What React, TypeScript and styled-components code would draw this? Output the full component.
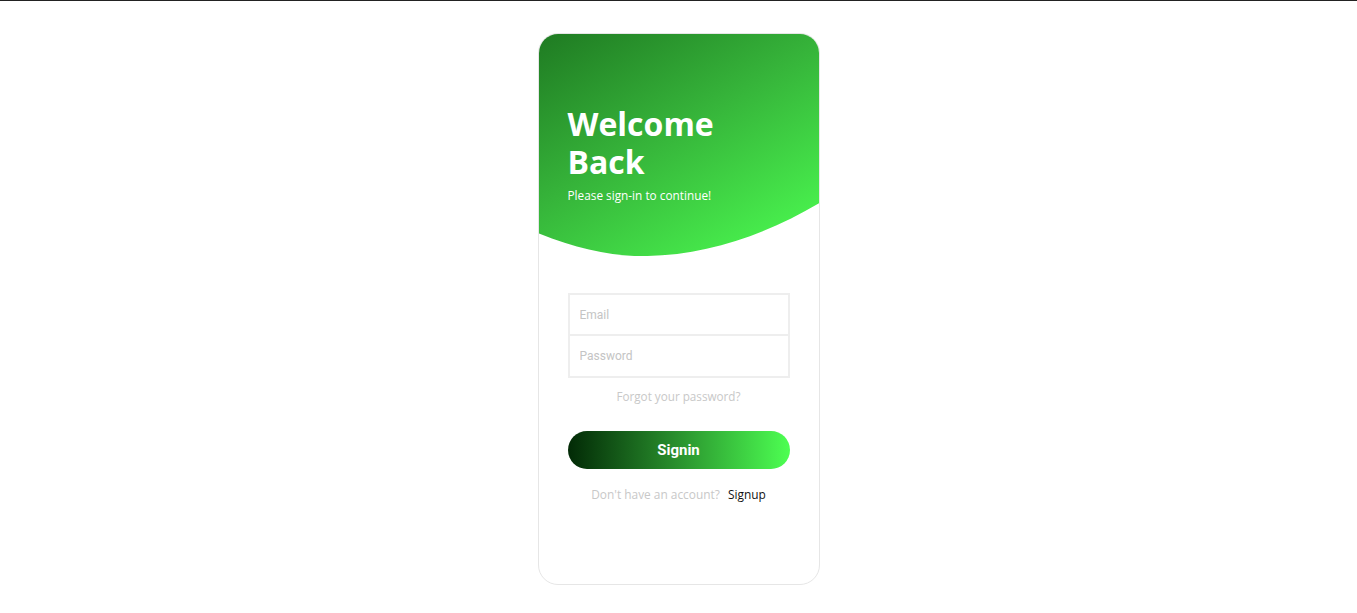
import React from "react";
import styled, { createGlobalStyle } from "styled-components";

const Global = createGlobalStyle`
  html, body { margin: 0; padding: 0; background: #fff; }
  body { border-top: 1px solid #222; font-family: "Open Sans", sans-serif; }
  * { box-sizing: border-box; }
`;

const Page = styled.div`
  display: flex;
  justify-content: center;
  padding-top: 32px;
`;

const Card = styled.div`
  width: 282px;
  height: 552px;
  border: 1px solid #e6e6e6;
  border-radius: 20px;
  overflow: hidden;
  display: flex;
  flex-direction: column;
  background: #fff;
`;

const Header = styled.div`
  height: 223px;
  margin: -1px -1px 0;
  background: linear-gradient(150deg, #1f7a22 0%, #36b43a 45%, #4dff52 100%);
  clip-path: path("M0,0 H282 V170 C230,201 170,222 110,223 C75,224 40,216 0,200 Z");
  padding: 72px 30px 0;
  display: flex;
  flex-direction: column;
`;

const Title = styled.h1`
  margin: 0;
  font-family: "Open Sans", sans-serif;
  font-weight: 700;
  font-size: 32px;
  line-height: 38px;
  color: #fff;
`;

const Subtitle = styled.p`
  margin: 6px 0 0;
  font-size: 11.8px;
  color: #fff;
  font-family: "Open Sans", sans-serif;
`;

const Form = styled.div`
  display: flex;
  flex-direction: column;
  padding: 37px 29px 0;
`;

const Fields = styled.div`
  display: flex;
  flex-direction: column;
  border: 2px solid #eeeeee;
`;

const Input = styled.input<{ $last?: boolean }>`
  height: ${(p) => (p.$last ? 40 : 41)}px;
  border: none;
  border-bottom: ${(p) => (p.$last ? "none" : "2px solid #eeeeee")};
  padding: 0 10px;
  font-family: Roboto, sans-serif;
  font-size: 12px;
  outline: none;
  &::placeholder { color: #c4c4c4; }
`;

const Forgot = styled.a`
  align-self: center;
  margin-top: 10px;
  font-size: 11.7px;
  color: #c8c8c8;
  font-family: "Open Sans", sans-serif;
`;

const Button = styled.button`
  margin-top: 27px;
  height: 38px;
  border: none;
  border-radius: 19px;
  background: linear-gradient(90deg, #022a06 0%, #2a922e 50%, #4dff52 100%);
  color: #fff;
  font-family: Roboto, sans-serif;
  font-weight: 700;
  font-size: 15px;
`;

const Bottom = styled.div`
  margin-top: 17px;
  display: flex;
  justify-content: center;
  gap: 8px;
  font-size: 11.9px;
  font-family: "Open Sans", sans-serif;
`;

const Muted = styled.span`
  color: #c8c8c8;
`;

const Link = styled.a`
  color: #111;
`;

export default function App() {
  return (
    <>
      <Global />
      <Page>
        <Card>
          <Header>
            <Title>
              Welcome
              <br />
              Back
            </Title>
            <Subtitle>Please sign-in to continue!</Subtitle>
          </Header>
          <Form>
            <Fields>
              <Input placeholder="Email" />
              <Input $last placeholder="Password" type="password" />
            </Fields>
            <Forgot>Forgot your password?</Forgot>
            <Button>Signin</Button>
            <Bottom>
              <Muted>Don't have an account?</Muted>
              <Link>Signup</Link>
            </Bottom>
          </Form>
        </Card>
      </Page>
    </>
  );
}
